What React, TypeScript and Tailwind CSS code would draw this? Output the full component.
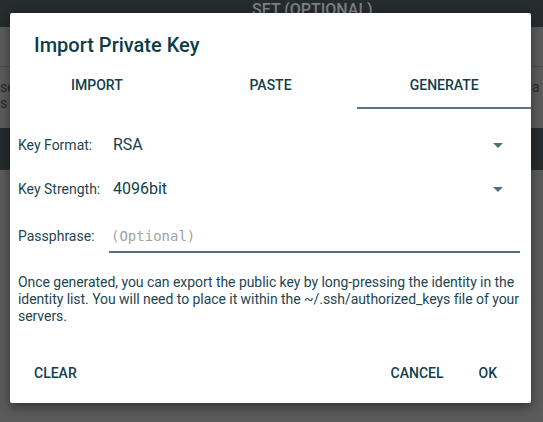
import React from "react";

const font = { fontFamily: "Roboto, 'Noto Sans', sans-serif" };

const tabs = ["IMPORT", "PASTE", "GENERATE"];

const Caret: React.FC = () => (
  <svg width="10" height="5" viewBox="0 0 10 5" className="shrink-0">
    <path d="M0 0 H10 L5 5 Z" fill="#546e7a" />
  </svg>
);

const SpinnerRow: React.FC<{ label: string; value: string }> = ({ label, value }) => (
  <div className="flex h-[44px] items-center">
    <span className="w-[91px] shrink-0 text-[14px] text-[#1e4651]">{label}</span>
    <div className="flex flex-1 items-center pl-[4px] pr-[20px]">
      <span className="flex-1 text-[16px] text-[#123f4b]">{value}</span>
      <Caret />
    </div>
  </div>
);

const App: React.FC = () => {
  return (
    <div className="relative h-[422px] w-[543px] overflow-hidden bg-[#5b5b5b]" style={font}>
      {/* Dimmed screen behind the dialog */}
      <div className="flex h-[27px] bg-[#252c2e] pl-[252px]">
        <span className="text-[16px] font-medium leading-[19px] text-[#7d8182]">SET (OPTIONAL)</span>
      </div>
      <div className="h-[39px] bg-[#5b5b5b]" />
      <div className="h-[1px] bg-[#4d4d4d]" />
      <div className="flex h-[61px] justify-between bg-[#5b5b5b] pt-[12px] text-[14px] leading-[16px] text-[#272727]">
        <div className="w-[12px] overflow-hidden whitespace-nowrap">
          <div>se</div>
          <div>s f</div>
        </div>
        <div className="w-[11px] overflow-hidden whitespace-nowrap">
          <div>a s</div>
        </div>
      </div>
      <div className="h-[42px] bg-[#252c2e]" />

      {/* Dialog */}
      <div className="absolute left-[10px] top-[13px] flex h-[390px] w-[521px] flex-col rounded-[2px] bg-white shadow-[0_4px_12px_rgba(0,0,0,0.45)]">
        <h2 className="px-[24px] pt-[20px] text-[20px] font-medium leading-[24px] text-[#0e3d4a]">
          Import Private Key
        </h2>

        <div className="mt-[4px] flex">
          {tabs.map((tab, i) => (
            <div
              key={tab}
              className={
                i === 2
                  ? "flex h-[48px] flex-1 items-center justify-center border-b-2 border-[#5a7380] pt-[2px] text-[14px] font-medium text-[#123f4b]"
                  : "flex h-[48px] flex-1 items-center justify-center border-b-2 border-transparent pt-[2px] text-[14px] font-medium text-[#123f4b]"
              }
            >
              {tab}
            </div>
          ))}
        </div>

        <div className="px-[8px] pt-[14px]">
          <SpinnerRow label="Key Format:" value="RSA" />
          <SpinnerRow label="Key Strength:" value="4096bit" />

          <div className="mt-[3px] flex h-[44px] items-center pr-[3px]">
            <span className="w-[91px] shrink-0 text-[14px] text-[#1e4651]">Passphrase:</span>
            <div className="flex flex-1 items-end self-stretch pt-[8px] pb-[5px]">
              <div className="flex h-full flex-1 items-center border-b-2 border-[#546e7a] pl-[2px]">
                <span className="text-[14px] text-[#a3a3a3]" style={{ fontFamily: "'DejaVu Sans Mono', monospace" }}>
                  (Optional)
                </span>
              </div>
            </div>
          </div>

          <p className="mt-[16px] mr-[-8px] text-[14px] leading-[17px] tracking-[-0.05px] text-[#1e4651]">
            Once generated, you can export the public key by long-pressing the identity in the identity list. You will
            need to place it within the ~/.ssh/authorized_keys file of your servers.
          </p>
        </div>

        <div className="mt-auto mb-[6px] flex h-[48px] items-center justify-between pl-[24px] pr-[34px] text-[14px] font-medium text-[#123f4b]">
          <span>CLEAR</span>
          <div className="flex gap-[35px]">
            <span>CANCEL</span>
            <span>OK</span>
          </div>
        </div>
      </div>
    </div>
  );
};

export default App;
